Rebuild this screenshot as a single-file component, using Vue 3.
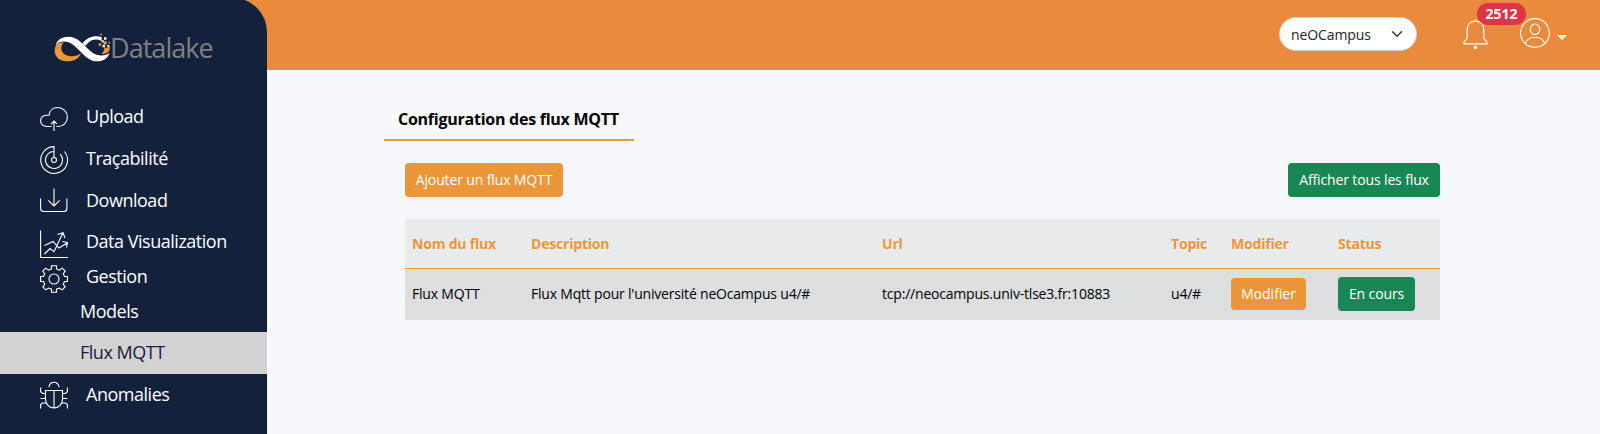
<script setup>
const nav = [
  { label: 'Upload', icon: 'upload', cls: 'n-upload' },
  { label: 'Traçabilité', icon: 'radar', cls: 'n-trace' },
  { label: 'Download', icon: 'download', cls: 'n-download' },
  { label: 'Data Visualization', icon: 'chart', cls: 'n-chart' },
  { label: 'Gestion', icon: 'gear', cls: 'n-gear' },
  { label: 'Models', cls: 'sub n-models' },
  { label: 'Flux MQTT', cls: 'sub active' },
  { label: 'Anomalies', icon: 'bug', cls: 'n-bug' }
]
</script>

<template>
  <div class="app">
    <aside class="sidebar">
      <div class="brand">
        <svg class="logo" viewBox="160 98 168 87">
          <path fill="#ea973a" d="M168 132C158 146 160 168 178 178C202 188 232 184 241 159C232 166 218 170 205 167C190 164 182 155 182 143C182 136 185 130 190 126C180 126 172 128 168 132Z" />
          <path fill="#fff" d="M165 134C170 116 188 108 205 109C225 110 238 122 250 134C262 146 275 160 290 164C305 167 318 165 327 157C321 176 305 183 290 183C270 183 255 170 240 154C225 139 212 125 195 124C182 123 172 126 165 134Z" />
          <path fill="#fff" d="M245 129C258 115 272 107 290 108L303 110V122C290 116 277 116 266 124L253 137Z" />
          <path fill="#ea973a" d="M327 138V146C326 156 318 161 302 161C309 155 312 149 311 141L317 143Z" />
          <path fill="#ea973a" d="M298 100h6v5h-6zM308 123h10v10h-10zM294 129h8v7h-8zM324 124h5v6h-5z" />
          <path fill="#fff" d="M310 111h7v7h-7zM305 135h8v6h-8zM320 134h6v6h-6zM303 120h6v6h-6z" />
        </svg>
        <span class="brand-name">Datalake</span>
      </div>
      <nav>
        <a v-for="item in nav" :key="item.label" class="item" :class="item.cls">
          <svg v-if="item.icon" class="nav-icon" viewBox="0 0 28 28">
            <template v-if="item.icon === 'upload'">
              <path d="M11.500 22.500H6.800C3 22.500.6 20 .6 17c0-3.200 2.400-5.500 6-5.700h2.400C9.500 6.500 13 3.500 17.500 3.500c5.800 0 9.900 4.300 9.900 9.500 0 5.500-4.200 9.500-9.600 9.500h-1.300M14 27V17.200M11 20l3-3 3 3" />
            </template>
            <template v-else-if="item.icon === 'radar'">
              <circle cx="14" cy="14" r="2.500" />
              <path d="M14 11.500V.6A13.400 13.400 0 1 0 24.500 5.500M14 5.500A8.500 8.500 0 1 0 20.200 8.200" />
            </template>
            <template v-else-if="item.icon === 'download'">
              <path d="M.6 10.500v10q0 3 3 3h20.300q3 0 3-3v-10M14 .5v17.500M8.300 12.300 14 18l5.700-5.700" />
            </template>
            <template v-else-if="item.icon === 'chart'">
              <path d="M.6.500v27H28M4.500 15.500l8.500-4 6 6.500 8.200-5M22.500 11.500l5 1-1 5M4.500 24l5.500-5.500 4 3.200L22.800 3M17.500 4.500l5.500-1.800 2 5.300" />
            </template>
            <template v-else-if="item.icon === 'gear'">
              <circle cx="14" cy="14" r="5" />
              <path d="M11.500.7h5v3.200l2.900 1.200 2.800-2 3 3-1.900 2.600 1.200 2.800h2.900v5h-2.900l-1.200 2.800 1.900 2.600-3 3-2.800-1.900-2.900 1.200v3.100h-5v-3.100l-2.900-1.200-2.800 1.900-3-3 1.900-2.600-1.200-2.800H.6v-5h2.900l1.200-2.800-1.900-2.600 3-3 2.800 2 2.900-1.200z" />
            </template>
            <template v-else>
              <path d="M5.500 9.500h17V18c0 5-3.500 9-8.500 9s-8.500-4-8.500-9zM14 9.500V27M8.800 6.200C9.500 3 11.500 1.200 14 1.200s4.500 1.800 5.200 5M.6 6.500v4.300l2.200 1.700h2.700M27.400 6.500v4.300l-2.200 1.700h-2.700M.6 17.500h4.900M22.500 17.500h4.900M.6 27.500v-4l1.800-1.500h4M27.400 27.500v-4L25.600 22h-4" />
            </template>
          </svg>
          <span class="label">{{ item.label }}</span>
        </a>
      </nav>
    </aside>

    <div class="page">
      <header class="topbar">
        <div class="select">
          <span>neOCampus</span>
          <svg class="chevron" viewBox="0 0 16 16"><path d="m2 5 6 6 6-6" /></svg>
        </div>
        <div class="bell">
          <svg viewBox="0 0 25 31">
            <path d="M12.500 0v2M4.200 19V10.500C4.200 5.500 7.500 2.200 12.500 2.200s8.300 3.300 8.300 8.300V19l3.300 4.500v1.300H.9v-1.300z" />
            <circle class="dot" cx="12.500" cy="28.500" r="1.700" />
          </svg>
          <span class="badge">2512</span>
        </div>
        <svg class="user" viewBox="0 0 30 30">
          <circle cx="15" cy="15" r="14.400" />
          <ellipse cx="15" cy="11.300" rx="4.800" ry="5.300" />
          <path d="M5.300 25.500C6.500 21.500 10 19.300 15 19.300s8.500 2.200 9.700 6.200" />
        </svg>
        <i class="caret"></i>
      </header>

      <main>
        <h1>Configuration des flux MQTT</h1>
        <div class="content">
          <div class="actions">
            <button class="btn orange add">Ajouter un flux MQTT</button>
            <button class="btn green all">Afficher tous les flux</button>
          </div>
          <table>
            <colgroup>
              <col class="c1"><col class="c2"><col class="c3"><col class="c4"><col class="c5"><col class="c6">
            </colgroup>
            <thead>
              <tr><th>Nom du flux</th><th>Description</th><th>Url</th><th>Topic</th><th>Modifier</th><th>Status</th></tr>
            </thead>
            <tbody>
              <tr>
                <td>Flux MQTT</td>
                <td>Flux Mqtt pour l'université neOcampus u4/#</td>
                <td>tcp://neocampus.univ-tlse3.fr:10883</td>
                <td>u4/#</td>
                <td><button class="btn orange edit">Modifier</button></td>
                <td><button class="btn green run">En cours</button></td>
              </tr>
            </tbody>
          </table>
        </div>
      </main>
    </div>
  </div>
</template>

<style>
body { margin: 0; background: #f7f8fb; }
</style>

<style scoped>
* { box-sizing: border-box; }
.app {
  display: flex;
  height: 434px;
  overflow: hidden;
  background: linear-gradient(#ea8a3c 70px, #f7f8fb 70px);
  font-family: "Open Sans", "Noto Sans", sans-serif;
  font-size: 14px;
  color: #000;
}
.sidebar {
  width: 267px;
  flex: none;
  margin-top: -2px;
  background: #14213d;
  border-top-right-radius: 34px;
}
.brand { display: flex; height: 98px; padding: 35px 0 0 54px; }
.logo { width: 56px; height: 29px; flex: none; }
.brand-name { font-size: 27px; line-height: 30px; color: #808080; font-weight: 400; letter-spacing: -.95px; }
.item {
  display: flex;
  align-items: center;
  height: 42px;
  padding-left: 40px;
  color: #fff;
  font-size: 18px;
  letter-spacing: -.48px;
}
.label { padding-bottom: 2px; }
.nav-icon { width: 28px; height: 28px; margin: 2px 18px 0 0; fill: none; stroke: #fff; stroke-width: 1.1; }
.n-chart { height: 40px; }
.n-chart .nav-icon { margin-top: 4px; }
.n-gear { height: 30px; }
.n-gear .nav-icon { margin-top: 4px; }
.n-models { height: 40px; }
.sub { padding-left: 80px; }
.active { background: #d3d3d3; color: #14213d; }
.n-bug .nav-icon { margin-top: 0; }
.page { flex: 1; min-width: 0; }
.topbar { position: relative; display: flex; height: 70px; }
.select {
  display: flex;
  align-items: center;
  justify-content: space-between;
  width: 138px;
  height: 34px;
  margin: 17px 0 0 1012px;
  padding: 0 13px 0 11px;
  border: 1px solid #ced4da;
  border-radius: 17px;
  background: #fff;
  color: #212529;
  letter-spacing: -.1px;
}
.chevron { width: 12px; height: 12px; margin-bottom: 1px; fill: none; stroke: #343a40; stroke-width: 2; stroke-linecap: round; stroke-linejoin: round; }
.bell { position: relative; width: 25px; height: 31px; margin: 19px 0 0 46px; }
.bell svg { display: block; width: 25px; height: 31px; fill: none; stroke: #fff; stroke-width: 1.200; }
.bell .dot { fill: #fff; stroke: none; }
.badge {
  position: absolute;
  left: 14px;
  top: -16px;
  width: 49px;
  height: 22px;
  border-radius: 11px;
  background: #dc3545;
  color: #fff;
  font-size: 14px;
  font-weight: 700;
  line-height: 22px;
  text-align: center;
}
.user { width: 30px; height: 30px; margin: 18px 0 0 32px; fill: none; stroke: #fff; stroke-width: 1.100; }
.caret { width: 0; height: 0; margin: 35px 0 0 7px; border: 5.500px solid transparent; border-top-color: #fff; border-bottom: 0; }
main { padding: 32px 0 0 117px; }
h1 {
  width: 250px;
  height: 39px;
  margin: 0;
  padding-left: 14px;
  border-bottom: 2px solid #ea973a;
  font-size: 16px;
  font-weight: 700;
  line-height: 35px;
  letter-spacing: -.25px;
  white-space: nowrap;
}
.content { width: 1035px; margin: 22px 0 0 21px; }
.actions { display: flex; justify-content: space-between; }
.btn {
  display: block;
  height: 34px;
  padding: 0 0 1px;
  border: 0;
  border-radius: 4px;
  color: #fff;
  font: inherit;
  letter-spacing: -.13px;
  white-space: nowrap;
}
.orange { background: #ea973a; }
.green { background: #198754; }
.add { width: 158px; }
.all { width: 152px; }
.edit { width: 75px; height: 32px; letter-spacing: 0; }
.run { width: 77px; }
table { width: 1035px; margin-top: 22px; border-collapse: separate; border-spacing: 0; table-layout: fixed; }
.c1 { width: 119px; }
.c2 { width: 351px; }
.c3 { width: 288px; }
.c4 { width: 60px; }
.c5 { width: 107px; }
.c6 { width: 110px; }
th, td { padding: 0 0 0 7px; text-align: left; white-space: nowrap; letter-spacing: -.2px; }
th:nth-child(n+4), td:nth-child(n+4) { padding-left: 8px; }
th { height: 50px; background: #e9ebec; color: #ea973a; border-bottom: 1px solid #ea973a; font-weight: 700; }
td { height: 51px; padding-bottom: 2px; background: #dddedf; }
</style>
